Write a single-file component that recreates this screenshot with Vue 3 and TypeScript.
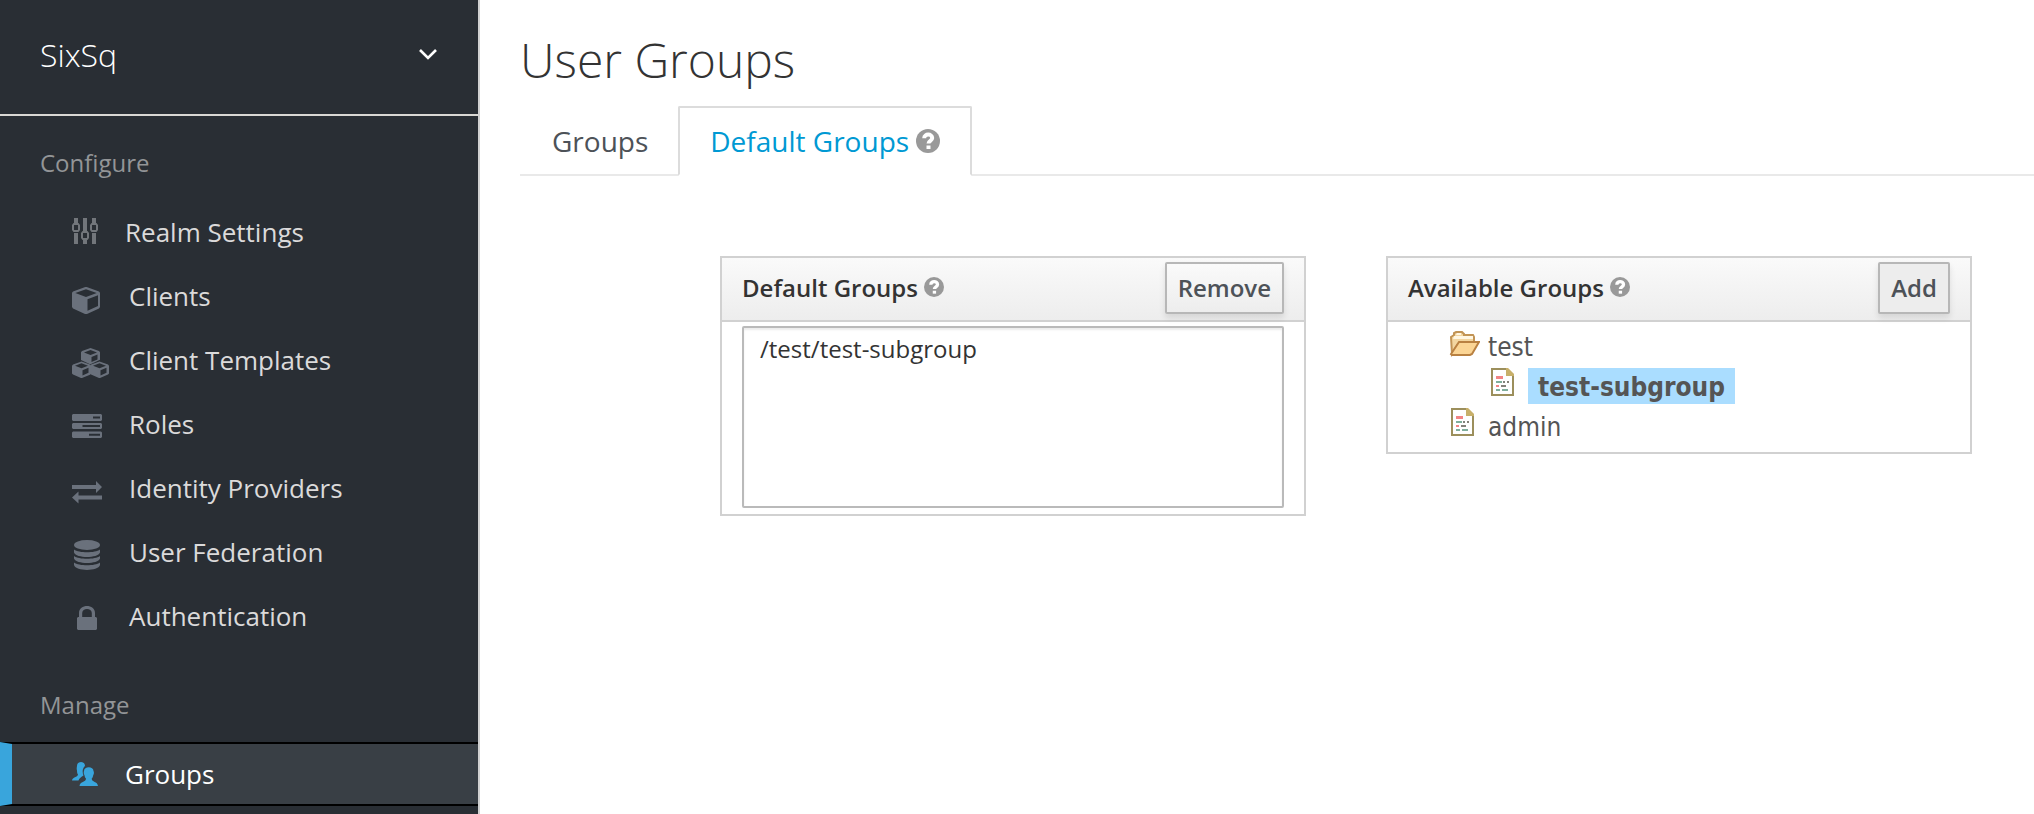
<script setup lang="ts">
import { ref } from 'vue'

interface NavItem {
  label: string
  icon: string
  wide?: boolean
  active?: boolean
}
interface NavSection {
  title: string
  items: NavItem[]
}
interface TreeNode {
  name: string
  children?: TreeNode[]
}

const sections: NavSection[] = [
  {
    title: 'Configure',
    items: [
      { label: 'Realm Settings', icon: 'sliders' },
      { label: 'Clients', icon: 'cube', wide: true },
      { label: 'Client Templates', icon: 'cubes', wide: true },
      { label: 'Roles', icon: 'tasks', wide: true },
      { label: 'Identity Providers', icon: 'exchange', wide: true },
      { label: 'User Federation', icon: 'database', wide: true },
      { label: 'Authentication', icon: 'lock', wide: true },
    ],
  },
  { title: 'Manage', items: [{ label: 'Groups', icon: 'users', active: true }] },
]

const defaultGroups = ['/test/test-subgroup']
const chosen = ref<string[]>([])
const tree: TreeNode[] = [
  { name: 'test', children: [{ name: 'test-subgroup' }] },
  { name: 'admin' },
]
const selectedGroup = ref('test-subgroup')
</script>

<template>
  <div class="page">
    <aside class="sidebar">
      <button type="button" class="realm">
        <span>SixSq</span>
        <svg class="chevron" viewBox="0 0 20 14" aria-hidden="true">
          <path d="M2 3l8 8 8-8" />
        </svg>
      </button>
      <nav>
        <section v-for="section in sections" :key="section.title" class="nav-section">
          <h2 class="nav-title">{{ section.title }}</h2>
          <ul class="nav-list">
            <li v-for="item in section.items" :key="item.label">
              <a href="#" class="nav-link" :class="{ wide: item.wide, active: item.active }">
                <svg class="nav-icon" viewBox="0 0 40 40" aria-hidden="true">
                  <g v-if="item.icon === 'sliders'" class="pf">
                    <path d="M2 6h4v6H2zM2 21h4v11H2zM11 6h4v13h-4zM11 28h4v4h-4zM20 6h4v6h-4zM20 21h4v11h-4z" />
                    <path
                      fill-rule="evenodd"
                      d="M1.500 11h5L8 13v5l-1.500 2h-5L0 18v-5zM2 13v5h4v-5zM10.500 19h5l1.500 2v5l-1.500 2h-5L9 26v-5zM11 21v5h4v-5zM19.500 11h5l1.500 2v5l-1.500 2h-5L18 18v-5zM20 13v5h4v-5z"
                    />
                  </g>
                  <path
                    v-else-if="item.icon === 'cube'"
                    fill-rule="evenodd"
                    d="M13.300 11h1.400L27 15.500l1 1.300V31l-1 1.500-12 5.500h-2L1 32.500 0 31V16.800l1-1.300zM14 13.200L3.300 17 14 21l10.700-4zM15.500 23.200v11.600L26 30V19.200z"
                  />
                  <g v-else-if="item.icon === 'cubes'" fill-rule="evenodd">
                    <path d="M18.500 8L27 11l1 1.200v7.600L19 24l-1 .3L9 20v-7.800L10 11zM18.500 10L12 12.400l6.500 2.500 6.500-2.500zM19.500 17v5l6-2.600v-5z" />
                    <path d="M9.500 21.500l8.500 3 1 1.200v8l-1 1L10 38H9l-8-3.600-1-1v-7.700l1-1.200zM9.500 23.300L3 25.700l6.500 2.500 6.500-2.500zM10.500 30.300v5.200l6-2.700v-5z" />
                    <path d="M27.500 21.500l8.500 3 1 1.200v7.700l-1 1-8 3.600h-1l-8-3.600-1-1v-7.700l1-1.200zM27.500 23.300L21 25.700l6.500 2.500 6.500-2.500zM28.500 30.300v5.200l6-2.700v-5z" />
                  </g>
                  <path
                    v-else-if="item.icon === 'tasks'"
                    fill-rule="evenodd"
                    d="M1 10h28l1 1v5l-1 1H1l-1-1v-5zM21 12.500v2h7v-2zM1 19h28l1 1v4l-1 1H1l-1-1v-4zM10.500 21v2H28v-2zM1 27.500h28l1 1V33l-1 1H1l-1-1v-4.500zM17 29.800v2h11v-2z"
                  />
                  <path
                    v-else-if="item.icon === 'exchange'"
                    d="M0 17h24v-4l6 6-6 6v-4H0zM30 27.500H6.500v-4L0 29.500l6.500 6v-4H30z"
                  />
                  <g v-else-if="item.icon === 'database'">
                    <ellipse cx="15" cy="13" rx="13" ry="5" />
                    <path d="M2 17.500c5 3.700 21 3.700 26 0v3c-2 6-24 6-26 0zM2 24c5 3.700 21 3.700 26 0v2.500c-2 6-24 6-26 0zM2 30.500c5 3.700 21 3.700 26 0V33c-2 6.500-24 6.500-26 0z" />
                  </g>
                  <path
                    v-else-if="item.icon === 'lock'"
                    fill-rule="evenodd"
                    d="M7 21v-4c0-9.300 16-9.300 16 0v4h1l1 1v11l-1 1H6l-1-1V22l1-1zM10.200 21h9.600v-4c0-5.300-9.600-5.300-9.600 0z"
                  />
                  <g v-else>
                    <path d="M5 12c0-5.500 8-5.500 8 0-2.500 2-3 6-1.500 9.500-2 1.500-4.500 2.500-5 5H0c.5-3.500 5.500-3 6-6-.8-1-1-2.500-1-4-.5-1.500-.3-3 0-4.500z" />
                    <path d="M12 17c0-5 9.500-5 9.500 0 .7 1.500.5 3-.3 4.200-.2 1.500-.7 2.500-1.500 3.300 0 4 5.800 2.500 6.300 7.500H7.500c.5-5 6.500-3.500 6.500-7.500-.8-.8-1.300-1.800-1.500-3.300-.8-1.200-1-2.700-.5-4.200z" />
                  </g>
                </svg>
                <span>{{ item.label }}</span>
              </a>
            </li>
          </ul>
        </section>
      </nav>
    </aside>

    <main class="content">
      <h1 class="title">User Groups</h1>
      <ul class="tabs">
        <li><a href="#" class="tab">Groups</a></li>
        <li>
          <a href="#" class="tab current">
            Default Groups
            <svg class="help" viewBox="0 0 24 24" aria-hidden="true">
              <circle cx="12" cy="12" r="12" />
              <path d="M8.200 9.200c0-5 8-4.500 8-.2 0 3-3.700 2.600-3.700 5.500" />
              <rect x="10.500" y="16.500" width="4" height="3.500" />
            </svg>
          </a>
        </li>
      </ul>

      <div class="panels">
        <section class="panel">
          <header class="panel-head">
            <label for="default-groups" class="panel-title">
              Default Groups
              <svg class="help small" viewBox="0 0 24 24" aria-hidden="true">
                <circle cx="12" cy="12" r="12" />
                <path d="M8.200 9.200c0-5 8-4.500 8-.2 0 3-3.700 2.600-3.700 5.500" />
                <rect x="10.500" y="16.500" width="4" height="3.500" />
              </svg>
            </label>
            <button type="button" class="action">Remove</button>
          </header>
          <div class="select-body">
            <select id="default-groups" v-model="chosen" class="group-select" multiple size="5">
              <option v-for="group in defaultGroups" :key="group" :value="group">{{ group }}</option>
            </select>
          </div>
        </section>

        <section class="panel">
          <header class="panel-head">
            <h2 class="panel-title">
              Available Groups
              <svg class="help small" viewBox="0 0 24 24" aria-hidden="true">
                <circle cx="12" cy="12" r="12" />
                <path d="M8.200 9.200c0-5 8-4.500 8-.2 0 3-3.700 2.600-3.700 5.500" />
                <rect x="10.500" y="16.500" width="4" height="3.500" />
              </svg>
            </h2>
            <button type="button" class="action pressed">Add</button>
          </header>
          <ul class="tree">
            <li v-for="node in tree" :key="node.name">
              <div class="node">
                <svg v-if="node.children" class="node-icon" viewBox="0 0 32 40" aria-hidden="true">
                  <path class="folder-back" d="M3 11l3-2V7l2-1h6l2 2v1h9l1 2v7H10L4 28z" />
                  <path class="folder-shine" d="M6 10h19v3H5zM9 7h4v2H8z" />
                  <path class="folder-front" d="M11 16h20l-7 12-2 1H4l-1-1z" />
                </svg>
                <svg v-else class="node-icon" viewBox="0 0 32 40" aria-hidden="true">
                  <path class="doc" d="M4 3h15l6 6v20H4z" />
                  <path class="fold" d="M18 2h2l6 6v2h-8z" />
                  <path class="red" d="M8 10h7v3H8zM8 19h3v2H8z" />
                  <path class="green" d="M8 15h6v2H8zM8 23h4v2H8zM14 23h6v2h-6z" />
                  <path class="dark" d="M15 15h2v2h-2zM19 15h2v2h-2zM13 19h5v2h-5z" />
                </svg>
                <button type="button" class="node-label" @click="selectedGroup = node.name">{{ node.name }}</button>
              </div>
              <ul v-if="node.children" class="branch">
                <li v-for="child in node.children" :key="child.name" class="node">
                  <svg class="node-icon" viewBox="0 0 32 40" aria-hidden="true">
                    <path class="doc" d="M4 3h15l6 6v20H4z" />
                    <path class="fold" d="M18 2h2l6 6v2h-8z" />
                    <path class="red" d="M8 10h7v3H8zM8 19h3v2H8z" />
                    <path class="green" d="M8 15h6v2H8zM8 23h4v2H8zM14 23h6v2h-6z" />
                    <path class="dark" d="M15 15h2v2h-2zM19 15h2v2h-2zM13 19h5v2h-5z" />
                  </svg>
                  <button
                    type="button"
                    class="node-label"
                    :class="{ selected: selectedGroup === child.name }"
                    @click="selectedGroup = child.name"
                  >{{ child.name }}</button>
                </li>
              </ul>
            </li>
          </ul>
        </section>
      </div>
    </main>
  </div>
</template>

<style>
body {
  margin: 0;
  background: #fff;
}
</style>

<style scoped>
.page {
  display: flex;
  min-height: 100vh;
  font-family: 'Open Sans', 'Noto Sans', sans-serif;
  font-size: 24px;
  color: #333;
}
.page * {
  box-sizing: border-box;
}
ul,
h1,
h2 {
  margin: 0;
  padding: 0;
  list-style: none;
  font-weight: 400;
}
a {
  text-decoration: none;
}
button {
  font-family: inherit;
  cursor: pointer;
}

.sidebar {
  flex: 0 0 480px;
  background: #292e34;
  border-right: 2px solid #d1d1d1;
}
.realm {
  display: flex;
  align-items: center;
  justify-content: space-between;
  width: 100%;
  height: 116px;
  padding: 0 40px 6px;
  border: 0;
  border-bottom: 2px solid #d9d8d4;
  background: none;
  color: #fff;
  font-size: 32px;
  font-weight: 300;
}
.chevron {
  width: 20px;
  height: 14px;
  fill: none;
  stroke: #fff;
  stroke-width: 2.6;
}
.nav-title {
  padding: 30px 40px 20px;
  font-size: 24px;
  line-height: 34px;
  color: #939597;
}
.nav-section + .nav-section .nav-title {
  padding-top: 40px;
}
.nav-link {
  display: flex;
  align-items: center;
  gap: 13px;
  height: 64px;
  padding-left: 72px;
  font-size: 26px;
  color: #dbdada;
}
.nav-link.wide {
  gap: 17px;
}
.nav-icon {
  width: 40px;
  height: 40px;
  fill: #6a717c;
}
.nav-icon .pf {
  fill: #72767b;
}
.nav-link.active {
  padding-left: 60px;
  border-top: 2px solid #000;
  border-bottom: 2px solid #000;
  border-left: 12px solid #39a5dc;
  background: #393f45;
  color: #fff;
}
.nav-link.active .nav-icon {
  fill: #39a5dc;
}

.content {
  flex: 1;
  min-width: 0;
  padding: 36px 0 40px 40px;
}
.title {
  font-size: 48px;
  font-weight: 300;
  line-height: 48px;
}
.tabs {
  display: flex;
  margin-top: 22px;
  border-bottom: 2px solid #e9e9e9;
}
.tab {
  display: flex;
  align-items: center;
  gap: 7px;
  height: 70px;
  margin-bottom: -2px;
  padding: 0 30px 0 32px;
  border-top: 2px solid transparent;
  border-bottom: 2px solid transparent;
  font-size: 28px;
  color: #4d5258;
}
.tab.current {
  padding: 0 30px;
  border: 2px solid #dcdcdc;
  border-bottom-color: #fff;
  border-radius: 2px 2px 0 0;
  background: #fff;
  color: #0099d3;
}
.help {
  flex: none;
  width: 24px;
  height: 24px;
  fill: #999;
}
.help path {
  fill: none;
  stroke: #fff;
  stroke-width: 4;
}
.help rect {
  fill: #fff;
}
.help.small {
  width: 20px;
  height: 20px;
}

.panels {
  display: grid;
  grid-template-columns: 1fr 1fr;
  align-items: start;
  gap: 80px;
  margin: 80px 62px 0 200px;
}
.panel {
  border: 2px solid #d1d1d1;
}
.panel-head {
  display: flex;
  align-items: center;
  justify-content: space-between;
  padding: 4px 20px 6px;
  border-bottom: 2px solid #d1d1d1;
  background: linear-gradient(#fafafa, #ededed);
}
.panel-title {
  display: flex;
  align-items: center;
  gap: 6px;
  padding-bottom: 2px;
  font-size: 24px;
  font-weight: 600;
}
.action {
  height: 52px;
  padding: 0 11px 2px;
  border: 2px solid #b7b7b7;
  border-radius: 2px;
  background: linear-gradient(#fafafa, #ededed);
  box-shadow: 0 4px 6px rgba(3, 3, 3, 0.1);
  color: #4d5258;
  font-size: 24px;
  font-weight: 600;
}
.action.pressed {
  background: #ededed;
}
.select-body {
  padding: 4px 20px 6px;
}
.group-select {
  display: block;
  width: 100%;
  height: 182px;
  padding: 4px 12px;
  overflow: auto;
  border: 2px solid #bababa;
  border-radius: 2px;
  outline: 0;
  background: #fff;
  box-shadow: inset 0 2px 2px rgba(3, 3, 3, 0.08);
  color: #333;
  font-family: inherit;
  font-size: 24px;
}
.group-select option {
  padding: 0 4px;
  line-height: 34px;
}

.tree {
  padding: 4px 20px 6px 60px;
}
.branch {
  padding-left: 40px;
}
.node {
  display: flex;
  align-items: center;
  gap: 8px;
  height: 40px;
}
.node-icon {
  flex: none;
  width: 32px;
  height: 40px;
}
.node-label {
  height: 36px;
  padding: 2px 0 0;
  border: 0;
  background: none;
  color: #555;
  font-family: 'DejaVu Sans Condensed', 'DejaVu Sans', sans-serif;
  font-size: 26px;
  line-height: 34px;
}
.node-label.selected {
  padding: 2px 10px 0;
  background: #aaddff;
  font-weight: 700;
}
.folder-back {
  fill: #f3d6a0;
  stroke: #c29455;
  stroke-width: 2;
}
.folder-shine {
  fill: #fff6e2;
}
.folder-front {
  fill: #fbd595;
  stroke: #b98142;
  stroke-width: 2;
}
.doc {
  fill: #fff;
  stroke: #9c8f5c;
  stroke-width: 2;
}
.fold {
  fill: #c8b06a;
}
.red {
  fill: #f28585;
}
.green {
  fill: #7fae9c;
}
.dark {
  fill: #84827a;
}
</style>
